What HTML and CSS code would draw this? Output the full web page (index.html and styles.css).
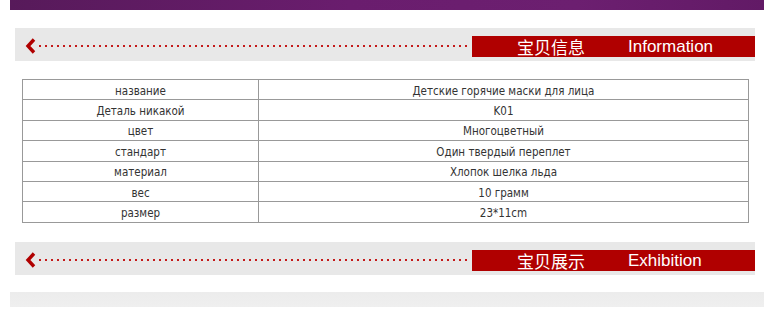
FILE: index.html
```html
<!DOCTYPE html>
<html>
<head>
<meta charset="utf-8">
<link rel="stylesheet" href="styles.css">
</head>
<body>
<div class="topbar"></div>
<div class="head">
  <svg class="chev" width="11" height="16" viewBox="0 0 11 16"><polyline points="9,1.5 3,8 9,14.5" fill="none" stroke="#b00000" stroke-width="3.4"/></svg>
  <div class="dots"></div>
  <div class="tag"><span class="cn">宝贝信息</span><span class="en">Information</span></div>
</div>
<table class="info">
  <tr><td class="k">название</td><td>Детские горячие маски для лица</td></tr>
  <tr><td class="k">Деталь никакой</td><td>K01</td></tr>
  <tr><td class="k">цвет</td><td>Многоцветный</td></tr>
  <tr><td class="k">стандарт</td><td>Один твердый переплет</td></tr>
  <tr><td class="k">материал</td><td>Хлопок шелка льда</td></tr>
  <tr><td class="k">вес</td><td>10 грамм</td></tr>
  <tr><td class="k">размер</td><td>23*11cm</td></tr>
</table>
<div class="head head2">
  <svg class="chev" width="11" height="16" viewBox="0 0 11 16"><polyline points="9,1.5 3,8 9,14.5" fill="none" stroke="#b00000" stroke-width="3.4"/></svg>
  <div class="dots"></div>
  <div class="tag"><span class="cn">宝贝展示</span><span class="en">Exhibition</span></div>
</div>
<div class="bottom"></div>
</body>
</html>
```
FILE: styles.css
```css
html, body { margin: 0; padding: 0; background: #fff; }
body { width: 764px; overflow: hidden; }
.topbar {
  margin-left: 10px;
  height: 10px;
  background: linear-gradient(to right, #571a5a 0%, #6a1d6e 45%, #6c1f70 75%, #621a66 100%);
}
.head {
  display: flex;
  align-items: flex-start;
  margin: 18px 9px 0 15px;
  height: 33px;
  background: #e8e8e8;
}
.chev { margin: 10px 0 0 10px; flex: none; }
.dots {
  flex: 1;
  height: 2px;
  margin: 17px 0 0 3px;
  background-image: linear-gradient(to right, #c41a1a 2px, transparent 2px);
  background-size: 6px 2px;
  background-repeat: repeat-x;
}
.tag {
  flex: none;
  width: 238px;
  height: 21px;
  margin: 8px 0 0 4px;
  padding-left: 45px;
  background: #b00000;
  color: #fff;
  display: flex;
  align-items: center;
  white-space: nowrap;
}
.cn { font: 17px/21px "Noto Sans CJK SC", sans-serif; width: 111px; }
.en { font: 17px/21px "Liberation Sans", Arial, sans-serif; }
.info {
  margin: 18px 0 0 22px;
  width: 727px;
  border-collapse: collapse;
  font: 11.5px/12px "DejaVu Sans Condensed", "DejaVu Sans", sans-serif;
  color: #333;
}
.info tr { height: 20.4px; }
.info td {
  border: 1px solid #999;
  padding: 2px 0 0;
  text-align: center;
  vertical-align: middle;
}
.info td.k { width: 235px; }
.head2 { margin-top: 19px; }
.bottom {
  margin: 17px 0 0 10px;
  height: 15px;
  background: linear-gradient(#ececec, #efefef);
}
```
